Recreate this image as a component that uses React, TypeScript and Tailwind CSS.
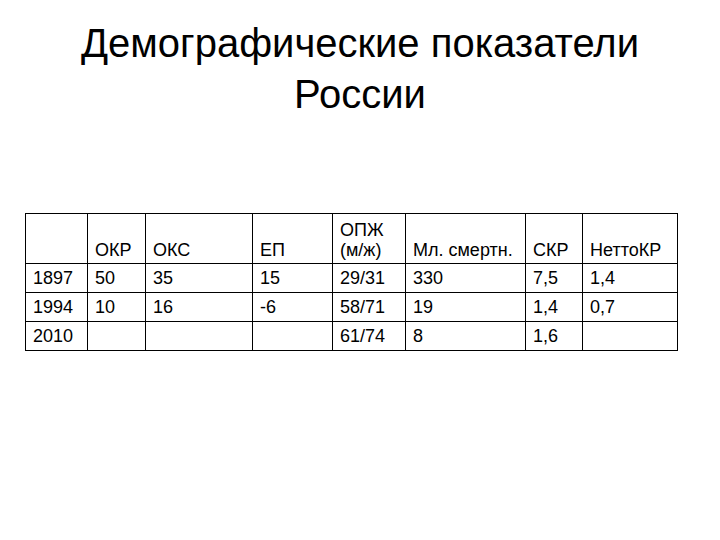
const cols = [62, 58, 107, 80, 73, 120, 57, 95];

const rows = [
  ["1897", "50", "35", "15", "29/31", "330", "7,5", "1,4"],
  ["1994", "10", "16", "-6", "58/71", "19", "1,4", "0,7"],
  ["2010", "", "", "", "61/74", "8", "1,6", ""],
];

const th = "border border-black px-[7px] pb-[3px] text-left align-bottom font-normal";

export default function App() {
  return (
    <main
      className="h-[540px] w-[720px] bg-white text-black"
      style={{ fontFamily: '"Liberation Sans", Arial, sans-serif' }}
    >
      {/* Title */}
      <h1 className="pt-[18px] text-center text-[40px] leading-[51px] font-normal">
        Демографические показатели
        <br />
        России
      </h1>

      {/* Table */}
      <div className="pl-[25px] pt-[93px]">
        <table className="table-fixed border-collapse text-[18px] leading-[20px]">
          <colgroup>
            {cols.map((w, i) => (
              <col key={i} style={{ width: w }} />
            ))}
          </colgroup>
          <thead>
            <tr className="h-[50px]">
              <th className="border border-black" />
              <th className={th}>ОКР</th>
              <th className={th}>ОКС</th>
              <th className={th}>ЕП</th>
              <th className={th}>
                ОПЖ
                <br />
                (м/ж)
              </th>
              <th className={th}>Мл. смертн.</th>
              <th className={th}>СКР</th>
              <th className={th}>НеттоКР</th>
            </tr>
          </thead>
          <tbody>
            {rows.map((r) => (
              <tr key={r[0]} className="h-[29px]">
                {r.map((c, i) => (
                  <td
                    key={i}
                    className="border border-black px-[7px] py-0 align-middle"
                  >
                    {c}
                  </td>
                ))}
              </tr>
            ))}
          </tbody>
        </table>
      </div>
    </main>
  );
}
